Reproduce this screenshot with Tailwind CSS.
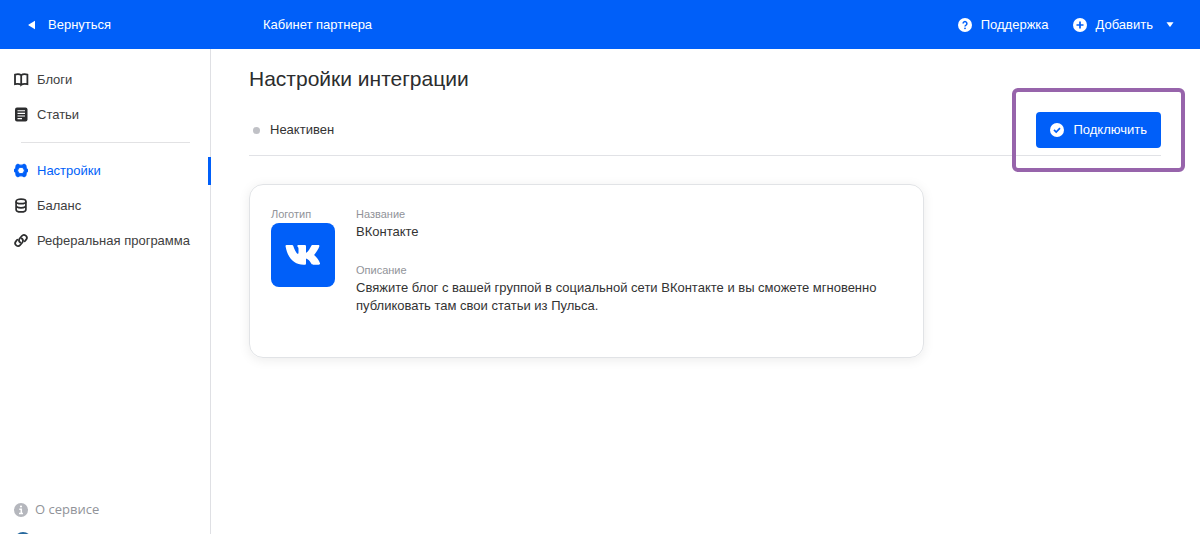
<!DOCTYPE html>
<html lang="ru">
<head>
<meta charset="utf-8">
<meta name="viewport" content="width=device-width, initial-scale=1">
<title>Настройки интеграции</title>
<script src="https://cdn.jsdelivr.net/npm/@tailwindcss/browser@4"></script>
</head>
<body class="flex h-screen flex-col overflow-hidden bg-white font-['Liberation_Sans',Arial,sans-serif] text-[13px] text-[#333]">
<header class="flex h-[49px] shrink-0 items-center bg-[#005ff9] text-white">
  <div class="flex w-[263px] shrink-0 pl-7">
    <a href="#" class="flex items-center gap-3">
      <svg class="h-[10px] w-2" viewBox="0 0 8 10" fill="currentColor" aria-hidden="true"><path d="M7 .8v8.4L.8 5.6a.7.7 0 0 1 0-1.2z"/></svg>
      Вернуться
    </a>
  </div>
  <a href="#">Кабинет партнера</a>
  <div class="ml-auto flex items-center gap-6 pr-[26px]">
    <a href="#" class="flex items-center gap-[9px]">
      <svg class="size-[14px]" viewBox="0 0 14 14" aria-hidden="true"><circle cx="7" cy="7" r="7" fill="#fff"/><path d="M5.1 5.5a1.9 1.9 0 1 1 2.9 1.6c-.7.4-1 .7-1 1.3" fill="none" stroke="#005ff9" stroke-width="1.5"/><circle cx="7" cy="10.3" r=".9" fill="#005ff9"/></svg>
      Поддержка
    </a>
    <button type="button" class="flex items-center gap-[9px]">
      <svg class="size-[14px]" viewBox="0 0 14 14" aria-hidden="true"><circle cx="7" cy="7" r="7" fill="#fff"/><path d="M7 3.500v7M3.500 7h7" stroke="#005ff9" stroke-width="1.7"/></svg>
      Добавить
      <svg class="ml-1 h-[5px] w-2" viewBox="0 0 8 5" fill="currentColor" aria-hidden="true"><path d="M.5.2h7L4.500 4.400q-.5.5-1 0z"/></svg>
    </button>
  </div>
</header>
<div class="flex min-h-0 flex-1">
  <aside class="flex w-[211px] shrink-0 flex-col border-r border-[#dfe0e4] pt-[13px]">
    <nav class="text-[#404040]">
      <a href="#" class="flex h-[35px] items-center gap-2 pl-[14px]">
        <svg class="size-[15px]" viewBox="0 0 15 15" fill="none" stroke="#2c2d2e" stroke-width="1.8" aria-hidden="true"><path d="M7.200 3.200C6 2.300 3.500 2 1 2.600v9.600c2.500-.4 5-.2 6.200.7M7.200 3.200C8.400 2.300 10.900 2 13.400 2.600v9.600c-2.500-.4-5-.2-6.200.7zM7.200 3.200v9.900"/></svg>
        Блоги
      </a>
      <a href="#" class="flex h-[35px] items-center gap-2 pl-[14px]">
        <svg class="size-[15px]" viewBox="0 0 15 15" aria-hidden="true"><rect x="1" y=".5" width="12.500" height="14" rx="2" fill="#2c2d2e"/><path d="M3.500 3.800H11M3.500 6.400H11M3.500 9H11M3.500 11.600H8" stroke="#fff" stroke-width="1.100"/></svg>
        Статьи
      </a>
      <hr class="mt-[10px] mr-5 mb-[10px] ml-[21px] border-[#e2e2e4]">
      <a href="#" aria-current="page" class="flex h-[35px] items-center gap-2 pl-[14px] text-[#005ff9]">
        <svg class="size-[15px]" viewBox="0 0 15 15" aria-hidden="true"><path fill="currentColor" stroke="currentColor" stroke-width="1" stroke-linejoin="round" fill-rule="evenodd" d="M3.900 1.100 5.600 1.900q1.400.6 2.800 0l1.700-.8 1.900 1.200.1 1.900q.2 1.200 1.400 2v2.600q-1.200.8-1.400 2l-.1 1.900-1.900 1.200-1.700-.8q-1.400-.6-2.800 0l-1.700.8L2 12.700l-.1-1.900Q1.700 9.600.5 8.800V6.200q1.200-.8 1.400-2L2 2.300zM7 4.200a3.300 3.300 0 1 0 0 6.600 3.300 3.300 0 0 0 0-6.600z"/></svg>
        Настройки
        <span class="-mr-px ml-auto h-7 w-[3px] bg-[#005ff9]"></span>
      </a>
      <a href="#" class="flex h-[35px] items-center gap-2 pl-[14px]">
        <svg class="size-[15px]" viewBox="0 0 15 15" fill="none" stroke="#2c2d2e" stroke-width="1.700" aria-hidden="true"><ellipse cx="7" cy="3.400" rx="4.900" ry="2.300"/><path d="M2.100 3.400v8c0 1.500 2.100 2.500 4.900 2.500s4.900-1 4.900-2.500v-8M2.100 7.300c0 1.500 2.100 2.500 4.900 2.500s4.900-1 4.900-2.500"/></svg>
        Баланс
      </a>
      <a href="#" class="flex h-[35px] items-center gap-2 pl-[14px]">
        <svg class="size-[15px]" viewBox="0 0 15 15" fill="none" stroke="#2c2d2e" stroke-width="1.800" stroke-linecap="round" aria-hidden="true"><path d="M6.200 9.500A2.900 2.900 0 0 1 5.700 5.500l2.100-2.500a2.800 2.800 0 0 1 4.300 3.600l-1.300 1.600"/><path d="M7.800 5.500a2.900 2.900 0 0 1 .5 4l-2.100 2.500a2.800 2.800 0 0 1-4.300-3.600l1.300-1.600"/></svg>
        Реферальная программа
      </a>
    </nav>
    <div class="mt-auto -mb-4 flex flex-col gap-3 pl-[14px] text-[#919399]">
      <a href="#" class="flex h-5 items-center gap-[7px] font-['Open_Sans',sans-serif]">
        <svg class="size-[14px]" viewBox="0 0 14 14" aria-hidden="true"><circle cx="7" cy="7" r="7" fill="#b5b7bd"/><path d="M5.300 6.200h2v4M5 10.400h4" fill="none" stroke="#fff" stroke-width="1.500"/><circle cx="7" cy="3.500" r="1.100" fill="#fff"/></svg>
        О сервисе
      </a>
      <a href="#" aria-label="Профиль" class="size-[18px] rounded-full border-2 border-[#27699e] bg-[#e8f0f6]"></a>
    </div>
  </aside>
  <main class="min-w-0 flex-1 pt-4 pr-[39px] pl-[38px]">
    <h1 class="text-[21px] leading-7 text-[#2c2d2e]">Настройки интеграции</h1>
    <div class="mt-[19px] flex items-center border-b border-[#e1e2e6] pb-[7px]">
      <span class="ml-1 size-[7px] rounded-full bg-[#c0c1c6]"></span>
      <span class="ml-[10px]">Неактивен</span>
      <div class="relative ml-auto">
        <button type="button" class="flex h-9 items-center gap-[9px] rounded bg-[#005ff9] px-[14px] text-white">
          <svg class="size-[14px]" viewBox="0 0 14 14" aria-hidden="true"><circle cx="7" cy="7" r="7" fill="#fff"/><path d="m4 6.900 2.200 2.100L10 5.200" fill="none" stroke="#005ff9" stroke-width="1.700"/></svg>
          Подключить
        </button>
        <div class="pointer-events-none absolute -inset-6 rounded-md border-4 border-[#9764ab]"></div>
      </div>
    </div>
    <section class="mt-7 flex min-h-[174px] max-w-[675px] rounded-[14px] border border-[#e1e3e6] px-[21px] pt-5 pb-8 shadow-[0_2px_12px_rgba(0,0,0,0.08)]">
      <div class="w-[85px] shrink-0">
        <div class="text-[11px] leading-[18px] text-[#919399]">Логотип</div>
        <svg class="size-16" viewBox="0 0 64 64" role="img" aria-label="ВКонтакте"><rect width="64" height="64" rx="8" fill="#005ff9"/><path d="M15.500 22h5.300c1 0 1.400.5 1.700 1.500 1.200 3.800 3.300 7.300 4.300 7.300.5 0 .7-.3.700-1.600v-3.600c-.1-1.800-1.200-2-1.200-2.700 0-.5.4-.9 1-.9h6.500c.9 0 1.200.5 1.200 1.500v6.300c1.800-.5 3.900-4.200 5.200-6.800.3-.7.800-1 1.700-1h5.200c1.200 0 1.500.6 1.200 1.500-.7 2.600-3.300 6-5.200 8.400 2.400 2.300 5 5.200 5.900 8.300.2.900-.2 1.500-1.300 1.500h-5.500c-1 0-1.500-.4-2-1.200-1.300-2.300-3-4.400-5.200-5v4.700c0 1-.5 1.500-1.500 1.500-9.400.4-16.400-5.200-18.900-18.100-.2-1.100.1-1.600.9-1.600z" fill="#fff"/></svg>
      </div>
      <dl class="leading-[18px]">
        <dt class="text-[11px] leading-[18px] text-[#919399]">Название</dt>
        <dd>ВКонтакте</dd>
        <dt class="mt-5 text-[11px] leading-[18px] text-[#919399]">Описание</dt>
        <dd>Свяжите блог с вашей группой в социальной сети ВКонтакте и вы сможете мгновенно публиковать там свои статьи из Пульса.</dd>
      </dl>
    </section>
  </main>
</div>
</body>
</html>
